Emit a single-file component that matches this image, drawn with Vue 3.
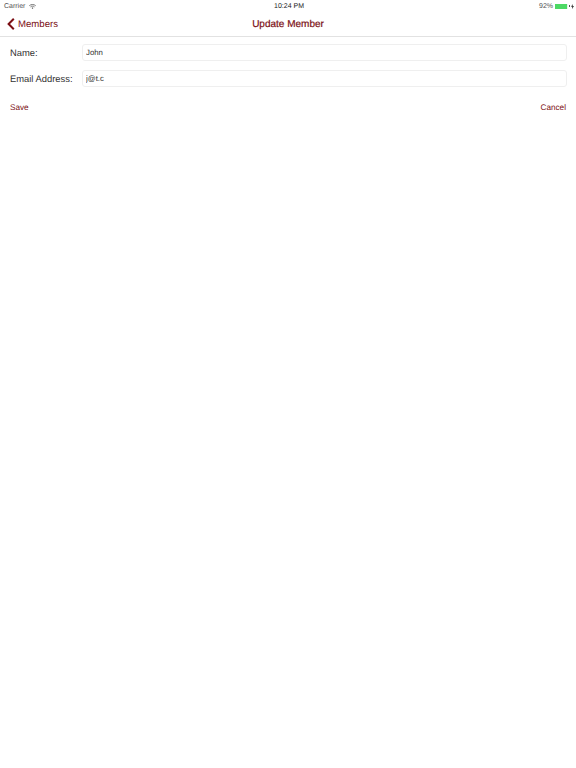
<script setup>
import { ref } from "vue";

const name = ref("John");
const email = ref("j@t.c");
</script>

<template>
  <main class="page">
    <!-- Status bar -->
    <div class="status-bar">
      <div class="status-left">
        <span>Carrier</span>
        <svg class="wifi" width="7" height="5" viewBox="0 0 7 5">
          <path d="M.3 1.7C2.1.1 4.9.1 6.7 1.7" fill="none" stroke="#555" stroke-width=".8" />
          <path d="M1.5 2.9C2.6 1.9 4.4 1.9 5.5 2.9" fill="none" stroke="#555" stroke-width=".8" />
          <path d="M2.6 3.9C3.1 3.5 3.9 3.5 4.4 3.9L3.5 5Z" fill="#555" />
        </svg>
      </div>
      <span class="status-time">10:24 PM</span>
      <div class="status-right">
        <span>92%</span>
        <div class="battery"><div class="battery-fill"></div></div>
        <div class="battery-cap"></div>
        <svg class="charge" width="3" height="5" viewBox="0 0 3 5">
          <path d="M1.8 0 0 2.8H1.2L1 5 3 2.1H1.7Z" fill="#333" />
        </svg>
      </div>
    </div>

    <!-- Nav bar -->
    <header class="nav-bar">
      <a class="back">
        <svg width="8" height="12" viewBox="0 0 8 12">
          <path d="M6.8 .8 1.6 6 6.8 11.2" fill="none" stroke="#7b0f14" stroke-width="2" />
        </svg>
        <span>Members</span>
      </a>
      <h1 class="nav-title">Update Member</h1>
    </header>

    <!-- Form -->
    <form class="form" @submit.prevent>
      <label class="row">
        <span class="row-label">Name:</span>
        <input v-model="name" type="text" class="row-input" />
      </label>
      <label class="row">
        <span class="row-label">Email Address:</span>
        <input v-model="email" type="text" class="row-input" />
      </label>
      <div class="actions">
        <button type="button" class="link">Save</button>
        <button type="button" class="link">Cancel</button>
      </div>
    </form>
  </main>
</template>

<style>
html,
body {
  margin: 0;
  background: #fff;
}
</style>

<style scoped>
.page {
  width: 576px;
  height: 768px;
  background: #fff;
  font-family: "Liberation Sans", Arial, sans-serif;
  text-rendering: geometricPrecision;
  overflow: hidden;
}

.status-bar {
  height: 12px;
  display: grid;
  grid-template-columns: 1fr auto 1fr;
  align-items: center;
  padding: 0 2px 0 4px;
  font-size: 7px;
  color: #555;
}

.status-left {
  display: flex;
  align-items: center;
  gap: 4px;
}

.status-time {
  color: #222;
}

.status-right {
  display: flex;
  align-items: center;
  justify-content: flex-end;
}

.battery {
  width: 13px;
  height: 5px;
  margin-left: 2px;
  background: #e4f7e8;
}

.battery-fill {
  width: 92%;
  height: 100%;
  background: #4cd964;
}

.battery-cap {
  width: 1px;
  height: 2px;
  margin-left: 1px;
  background: #555;
}

.charge {
  margin-left: 1px;
}

.nav-bar {
  height: 24px;
  border-bottom: 1px solid #e2e2e2;
  display: flex;
  align-items: center;
  justify-content: center;
  position: relative;
}

.back {
  position: absolute;
  left: 7px;
  top: 6px;
  display: flex;
  align-items: center;
  gap: 3px;
  font-size: 9.6px;
  color: #7b0f14;
}

.nav-title {
  margin: 0;
  font-size: 10px;
  font-weight: 400;
  color: #7b0f14;
  -webkit-text-stroke: 0.2px #7b0f14;
}

.form {
  padding: 7px 9px 0 10px;
}

.row {
  display: flex;
  align-items: center;
  height: 17px;
  margin-bottom: 9px;
}

.row-label {
  width: 72px;
  flex: none;
  font-size: 9.4px;
  color: #333;
}

.row-input {
  flex: 1;
  min-width: 0;
  height: 17px;
  box-sizing: border-box;
  padding: 0 3px;
  border: 1px solid #efefef;
  border-radius: 3px;
  font: 7.8px "Liberation Sans", Arial, sans-serif;
  text-rendering: geometricPrecision;
  color: #333;
  outline: none;
}

.actions {
  display: flex;
  justify-content: space-between;
  margin-top: 16px;
  padding-right: 1px;
}

.link {
  padding: 0;
  border: none;
  background: none;
  font: 8.2px "Liberation Sans", Arial, sans-serif;
  text-rendering: geometricPrecision;
  color: #7b0f14;
}
</style>
